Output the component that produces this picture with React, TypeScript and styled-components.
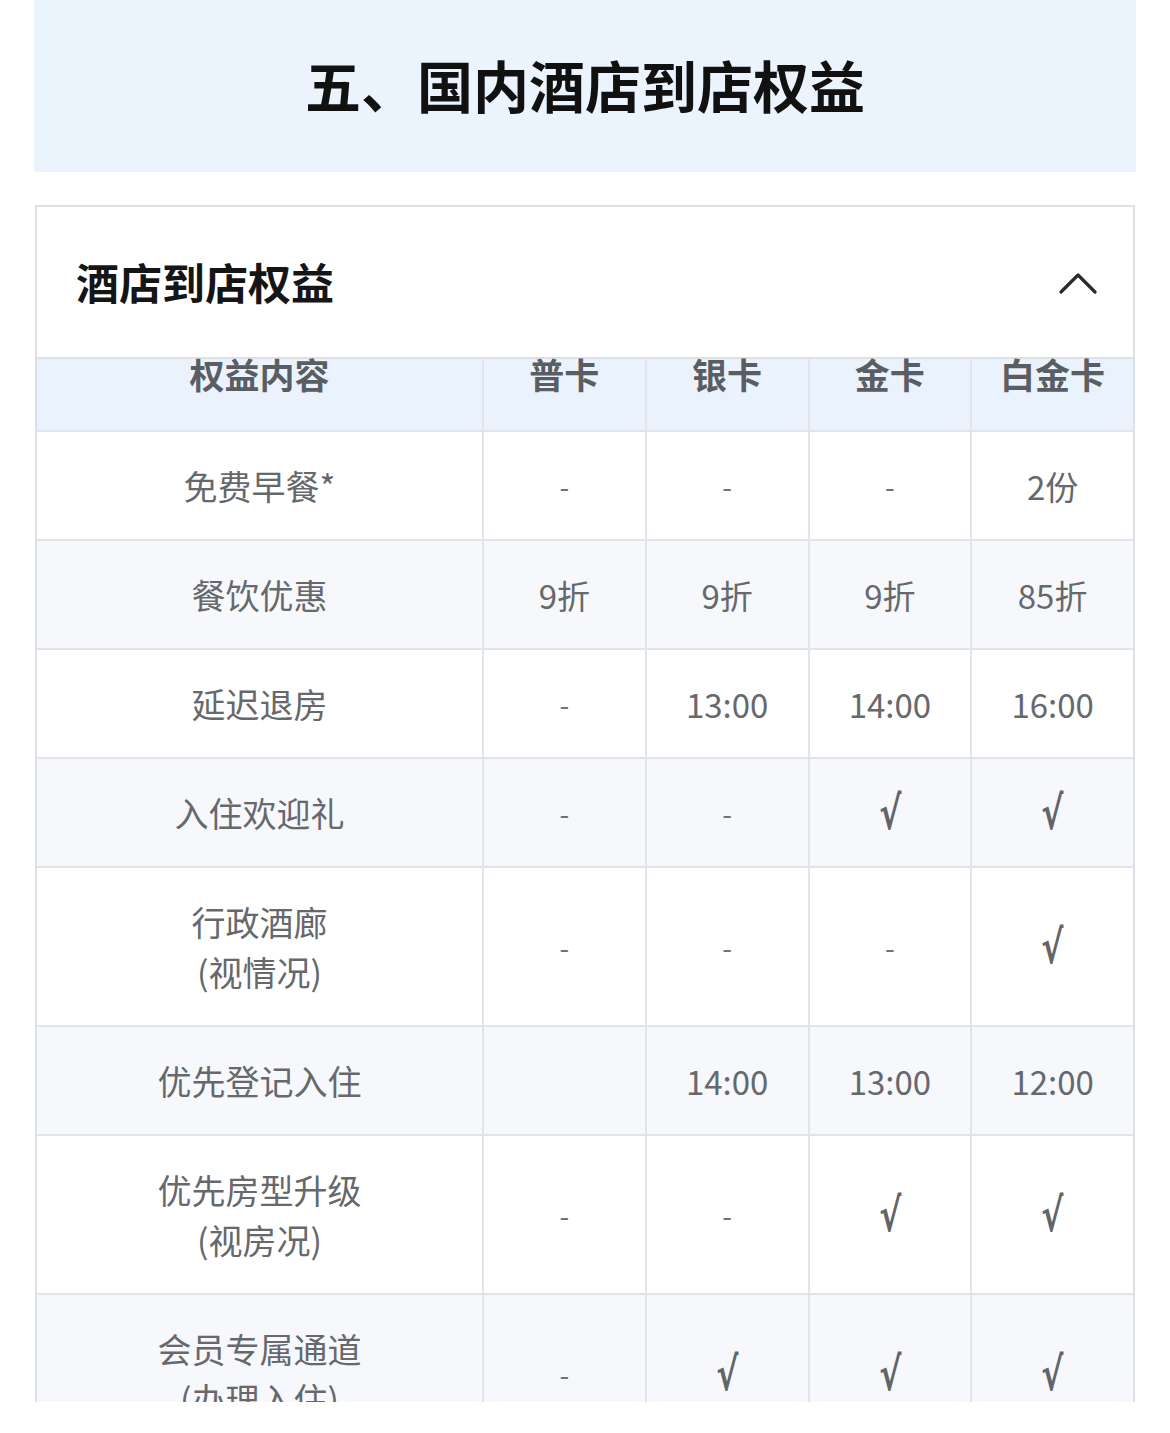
import React from "react";
import styled, { createGlobalStyle } from "styled-components";

const Global = createGlobalStyle`
  html, body { margin: 0; padding: 0; background: #ffffff; }
  body { font-family: "Noto Sans CJK SC", "Noto Sans", sans-serif; }
`;

const Page = styled.div`
  width: 1170px;
  display: flex;
  flex-direction: column;
`;

const Banner = styled.div`
  margin: 0 34px;
  height: 172px;
  background: #ebf4fd;
  display: flex;
  align-items: center;
  justify-content: center;
`;

const BannerTitle = styled.h1`
  margin: 0;
  font-size: 56px;
  font-weight: 700;
  color: #111111;
  line-height: 1;
  padding-bottom: 4px;
`;

const Card = styled.section`
  margin: 33px 35px 0;
  height: 1197px;
  overflow: hidden;
  border: 2px solid #dde1e6;
  border-bottom: none;
  box-sizing: border-box;
  display: flex;
  flex-direction: column;
`;

const CardHeader = styled.div`
  height: 150px;
  flex: none;
  display: flex;
  align-items: center;
  justify-content: space-between;
  padding: 0 36px 0 39px;
  border-bottom: 2px solid #dde1e6;
  background: #ffffff;
`;

const CardTitle = styled.h2`
  margin: 0;
  font-size: 43px;
  font-weight: 700;
  color: #151515;
  line-height: 1;
  padding-bottom: 2px;
`;

const Chevron = styled.svg`
  width: 38px;
  height: 22px;
  margin-top: 2px;
`;

const Grid = styled.div`
  display: grid;
  grid-template-columns: 445px repeat(4, 1fr);
  gap: 2px;
  background: #e1e5ea;
  flex: none;
`;

const HeadCell = styled.div`
  background: #eaf3fd;
  height: 71px;
  display: flex;
  justify-content: center;
  align-items: flex-start;
  font-size: 35px;
  font-weight: 700;
  line-height: 30px;
  color: #5a5d62;
`;

const Cell = styled.div<{ $alt: boolean; $tall: boolean }>`
  background: ${(p) => (p.$alt ? "#f6f8fc" : "#ffffff")};
  height: ${(p) => (p.$tall ? 157 : 107)}px;
  display: flex;
  flex-direction: column;
  align-items: center;
  justify-content: center;
  font-size: 33px;
  line-height: 50px;
  color: #66686c;
  text-align: center;
`;

const Label = styled.span`
  font-size: 34px;
`;

const Check = styled.span`
  font-family: "DejaVu Sans", sans-serif;
  font-size: 46px;
  font-weight: 700;
  line-height: 50px;
  color: #626468;
  transform: scaleX(0.72);
`;

const Dash = styled.span`
  font-size: 28px;
  color: #707276;
`;

type Row = { label: string[]; values: string[] };

const rows: Row[] = [
  { label: ["免费早餐*"], values: ["-", "-", "-", "2份"] },
  { label: ["餐饮优惠"], values: ["9折", "9折", "9折", "85折"] },
  { label: ["延迟退房"], values: ["-", "13:00", "14:00", "16:00"] },
  { label: ["入住欢迎礼"], values: ["-", "-", "√", "√"] },
  { label: ["行政酒廊", "(视情况)"], values: ["-", "-", "-", "√"] },
  { label: ["优先登记入住"], values: ["", "14:00", "13:00", "12:00"] },
  { label: ["优先房型升级", "(视房况)"], values: ["-", "-", "√", "√"] },
  { label: ["会员专属通道", "(办理入住)"], values: ["-", "√", "√", "√"] },
];

const headers = ["权益内容", "普卡", "银卡", "金卡", "白金卡"];

function renderValue(v: string) {
  if (v === "√") return <Check>√</Check>;
  if (v === "-") return <Dash>-</Dash>;
  return v;
}

export default function App() {
  return (
    <Page>
      <Global />
      <Banner>
        <BannerTitle>五、国内酒店到店权益</BannerTitle>
      </Banner>
      <Card>
        <CardHeader>
          <CardTitle>酒店到店权益</CardTitle>
          <Chevron viewBox="0 0 38 22">
            <polyline
              points="2,20 19,3 36,20"
              fill="none"
              stroke="#2b2b2b"
              strokeWidth="3.2"
              strokeLinecap="round"
              strokeLinejoin="round"
            />
          </Chevron>
        </CardHeader>
        <Grid>
          {headers.map((h) => (
            <HeadCell key={h}>{h}</HeadCell>
          ))}
          {rows.map((r, i) => {
            const alt = i % 2 === 1;
            const tall = r.label.length > 1;
            return (
              <React.Fragment key={r.label[0]}>
                <Cell $alt={alt} $tall={tall}>
                  {r.label.map((l) => (
                    <Label key={l}>{l}</Label>
                  ))}
                </Cell>
                {r.values.map((v, j) => (
                  <Cell key={j} $alt={alt} $tall={tall}>
                    {renderValue(v)}
                  </Cell>
                ))}
              </React.Fragment>
            );
          })}
        </Grid>
      </Card>
    </Page>
  );
}
